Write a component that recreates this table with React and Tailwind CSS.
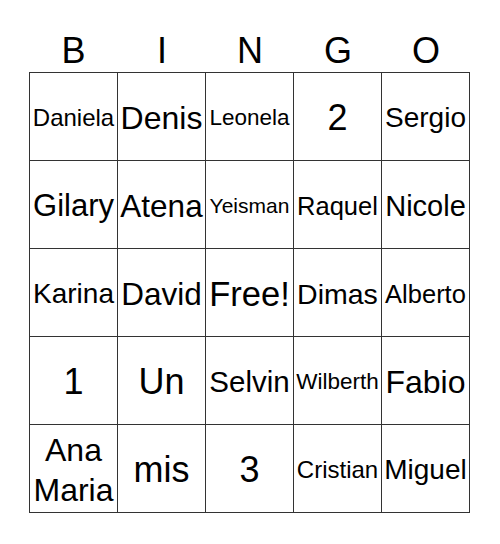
import React from 'react';

// each square: label and the font size that fits it in the cell
const rows = [
    [['Daniela', 24], ['Denis', 32], ['Leonela', 22.5], ['2', 36], ['Sergio', 28]],
    [['Gilary', 31], ['Atena', 31.5], ['Yeisman', 21], ['Raquel', 25.5], ['Nicole', 29]],
    [['Karina', 28], ['David', 31.5], ['Free!', 34.5], ['Dimas', 28.5], ['Alberto', 25.5]],
    [['1', 36], ['Un', 36], ['Selvin', 29.5], ['Wilberth', 22.5], ['Fabio', 32]],
    [['Ana Maria', 32], ['mis', 36], ['3', 36], ['Cristian', 24], ['Miguel', 28]],
];

const App = () => {
    return (
        <div className="w-[500px] h-[544px] bg-white text-black pt-[33px] pl-[29px]" style={{ fontFamily: '"Liberation Sans", Arial, sans-serif' }}>
            {/* Header letters */}
            <div className="flex w-[441px] h-[39px]">
                {['B', 'I', 'N', 'G', 'O'].map(l => (
                    <div key={l} className="w-[88px] first:w-[89px] text-center text-[36px] leading-[36px]">
                        {l}
                    </div>
                ))}
            </div>

            {/* Card */}
            <div className="grid grid-cols-[repeat(5,88px)] w-[441px] border-l border-t border-[#333]">
                {rows.flat().map(([label, size], i) => (
                    <div
                        key={i}
                        className="h-[88px] pt-[3px] border-r border-b border-[#333] flex items-center justify-center text-center leading-[40px]"
                        style={{ fontSize: size }}
                    >
                        {label === 'Ana Maria' ? (<span>Ana<br />Maria</span>) : label}
                    </div>
                ))}
            </div>
        </div>
    );
};

export default App;
